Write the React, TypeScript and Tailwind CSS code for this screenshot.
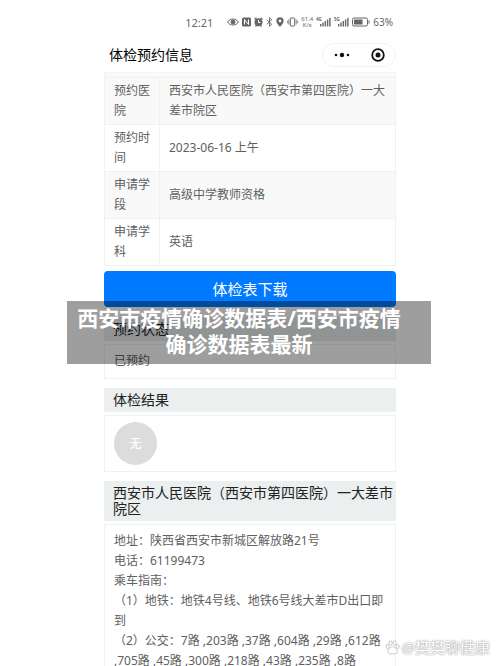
import type { ReactNode } from "react";

const BOOKING_ROWS = [
  { label: "预约医院", value: "西安市人民医院（西安市第四医院）一大差市院区" },
  { label: "预约时间", value: "2023-06-16 上午" },
  { label: "申请学段", value: "高级中学教师资格" },
  { label: "申请学科", value: "英语" },
];

const HOSPITAL_LINES = [
  "地址：陕西省西安市新城区解放路21号",
  "电话：61199473",
  "乘车指南：",
  "（1）地铁：地铁4号线、地铁6号线大差市D出口即到",
  "（2）公交：7路 ,203路 ,37路 ,604路 ,29路 ,612路 ,705路 ,45路 ,300路 ,218路 ,43路 ,235路 ,8路",
];

const Signal = ({ label }: { label: string }) => (
  <svg viewBox="0 0 15 10" className="w-[15px] h-[10px]" fill="currentColor">
    <text x="0" y="4" fontSize="4.5" fontWeight="700">
      {label}
    </text>
    <rect x="4" y="7" width="1.4" height="2.5" />
    <rect x="6.3" y="5.5" width="1.4" height="4" />
    <rect x="8.6" y="4" width="1.4" height="5.5" />
    <rect x="10.9" y="2.5" width="1.4" height="7" />
    <rect x="13.2" y="0.8" width="1.4" height="8.7" />
  </svg>
);

const StatusBar = () => (
  <div className="flex items-center justify-end h-11 pr-[3px] text-[#666] text-[11px] leading-none">
    <span className="mr-[14px]">12:21</span>
    <div className="flex items-center gap-[3px]">
      <svg viewBox="0 0 12 10" className="w-3 h-[10px]" fill="none" stroke="currentColor">
        <path d="M.6 5C3 1 9 1 11.4 5 9 9 3 9 .6 5Z" />
        <circle cx="6" cy="5" r="2" fill="currentColor" />
      </svg>
      <svg viewBox="0 0 9 10" className="w-[9px] h-[10px]" fill="none">
        <rect x="0" y="0.5" width="9" height="9" rx="1.5" fill="currentColor" />
        <path d="M2.5 7.5v-5l4 5v-5" stroke="#fff" />
      </svg>
      <svg viewBox="0 0 9 10" className="w-[9px] h-[10px]" fill="none">
        <circle cx="4.5" cy="5.3" r="4" fill="currentColor" />
        <path d="M.4 2.4 2.4.6M8.6 2.4 6.6.6M1.5 9.5l1-1M7.5 9.5l-1-1" stroke="currentColor" strokeWidth="1.2" />
        <path d="M4.5 3v2.5h2" stroke="#fff" />
      </svg>
      <svg viewBox="0 0 7 10" className="w-[7px] h-[10px]" fill="none" stroke="currentColor" strokeWidth="0.9">
        <path d="m.8 2.8 5 4.4L3.5 9.3V.7l2.3 2.1-5 4.4" />
      </svg>
      <svg viewBox="0 0 8 10" className="w-2 h-[10px]">
        <path
          d="M4 .3a3.6 3.6 0 0 0-3.6 3.6C.4 6.3 4 9.800 4 9.800s3.600-3.500 3.600-5.900A3.600 3.600 0 0 0 4 .3Zm0 2.200a1.400 1.400 0 1 1 0 2.800 1.400 1.400 0 0 1 0-2.800Z"
          fill="currentColor"
        />
      </svg>
      <svg viewBox="0 0 11 10" className="w-[11px] h-[10px]" fill="none" stroke="currentColor">
        <rect x="3.3" y="1" width="4.4" height="8" rx="0.6" />
        <path d="M1.8 2.5v5M9.2 2.5v5M.4 3.8v2.4M10.6 3.8v2.4" strokeWidth="0.8" />
      </svg>
      <div className="w-3 text-[6px] leading-[6px] text-center">
        <div>61.4</div>
        <div>K/s</div>
      </div>
      <Signal label="4G" />
      <Signal label="5G" />
      <svg viewBox="0 0 18 10" className="w-[18px] h-[10px]" fill="none">
        <rect x="0.5" y="1" width="15" height="8" rx="1.5" stroke="currentColor" />
        <rect x="2" y="2.5" width="8.5" height="5" fill="currentColor" />
        <path d="M17 3.5v3" stroke="currentColor" />
      </svg>
      <span className="text-[10px]">63%</span>
    </div>
  </div>
);

const TitleBar = () => (
  <header className="flex items-center justify-between h-[22px] pl-[5px]">
    <h1 className="text-[14px] leading-5 text-black">体检预约信息</h1>
    <div className="flex items-center justify-around w-[74px] h-6 rounded-full border border-[#f3f3f3]">
      <button type="button" aria-label="更多">
        <svg viewBox="0 0 16 6" className="w-4 h-[6px]" fill="#111">
          <circle cx="2" cy="3" r="1.3" />
          <circle cx="8" cy="3" r="2.2" />
          <circle cx="14" cy="3" r="1.3" />
        </svg>
      </button>
      <button type="button" aria-label="关闭">
        <svg viewBox="0 0 14 14" className="w-[14px] h-[14px]" fill="none">
          <circle cx="7" cy="7" r="5.8" stroke="#111" strokeWidth="1.8" />
          <circle cx="7" cy="7" r="2.5" fill="#111" />
        </svg>
      </button>
    </div>
  </header>
);

const Section = ({ title, children }: { title: string; children: ReactNode }) => (
  <section className="mb-[9px] last:mb-0">
    <h2 className="pl-[9px] py-1 text-[14px] leading-4 text-[#222] bg-[#ebefef]">{title}</h2>
    <div className="mt-[3px] px-[9px] border border-[#f0f2f2] text-[#606060]">{children}</div>
  </section>
);

const Watermark = () => (
  <div className="absolute right-[10px] top-[637px] flex items-center gap-[2px] text-[15px] leading-5 text-white [text-shadow:0_0_2px_#999,0_0_1px_#aaa]">
    <svg viewBox="0 0 15 15" className="w-[15px] h-[15px]" fill="#fff" stroke="#bbb" strokeWidth="0.8">
      <ellipse cx="2.5" cy="6.5" rx="1.6" ry="2.1" />
      <ellipse cx="5.6" cy="3" rx="1.6" ry="2.1" />
      <ellipse cx="9.6" cy="3" rx="1.6" ry="2.1" />
      <ellipse cx="12.6" cy="6.5" rx="1.6" ry="2.1" />
      <path d="M7.5 6.5c2 0 4.8 3.3 4.8 5.2 0 2.8-2.8 2-4.8 2s-4.8.8-4.8-2c0-1.9 2.8-5.2 4.8-5.2Z" />
    </svg>
    <span>@樊樊聊健康</span>
  </div>
);

export default function App() {
  return (
    <div className="relative min-h-screen overflow-hidden bg-white font-['Noto_Sans','Noto_Sans_CJK_SC',sans-serif] text-[12px] leading-5">
      <div className="px-[104px]">
        <StatusBar />
        <TitleBar />

        <main className="mt-[6px]">
          <div className="h-[5px] border border-b-0 border-[#f5f5f5] bg-[#fafafa]" />
          <table className="w-full border-collapse text-[#606060]">
            <tbody>
              {BOOKING_ROWS.map((row) => (
                <tr key={row.label} className="odd:bg-[#f9f9f9]">
                  <th scope="row" className="w-[55px] px-[9px] py-[3px] border border-[#f1f1f1] text-left font-normal">
                    {row.label}
                  </th>
                  <td className="px-[9px] py-[3px] border border-[#f1f1f1]">{row.value}</td>
                </tr>
              ))}
            </tbody>
          </table>

          <button
            type="button"
            className="block w-full h-9 mt-[5px] mb-[10px] rounded-[4px] bg-[#007aff] text-white text-[15px] leading-5"
          >
            体检表下载
          </button>

          <Section title="预约状态">
            <p className="pt-[6px] pb-[7px]">已预约</p>
          </Section>

          <Section title="体检结果">
            <div className="py-[6px]">
              <div className="flex items-center justify-center w-[43px] h-[43px] rounded-full bg-[#dcdcdc] text-white font-medium">
                无
              </div>
            </div>
          </Section>

          <Section title="西安市人民医院（西安市第四医院）一大差市院区">
            <div className="pt-[6px]">
              {HOSPITAL_LINES.map((line) => (
                <p key={line}>{line}</p>
              ))}
            </div>
          </Section>
        </main>
      </div>

      <div className="absolute left-[67px] right-[69px] top-[301px] pt-1 pb-[7px] pr-5 bg-black/38 text-center text-[21px] leading-[26px] font-bold text-white">
        西安市疫情确诊数据表/西安市疫情
        <br />
        确诊数据表最新
      </div>

      <Watermark />
    </div>
  );
}
